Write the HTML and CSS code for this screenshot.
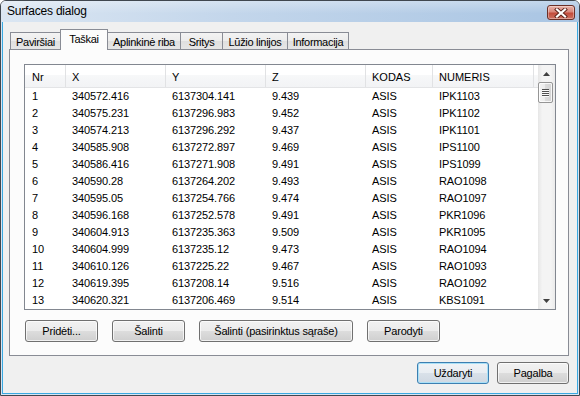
FILE: index.html
```html
<!DOCTYPE html>
<html lang="lt">
<head>
<meta charset="UTF-8">
<title>Surfaces dialog</title>
<link rel="stylesheet" href="styles.css">
</head>
<body>
  <div class="window">
    <div class="titlebar">
      <span class="title">Surfaces dialog</span>
      <div class="close-btn">
        <svg width="14" height="10" viewBox="0 0 14 10">
          <path d="M3 1.5 L11 8.5 M11 1.5 L3 8.5" stroke="#5b2119" stroke-width="4" stroke-linecap="square"/>
          <path d="M3 1.5 L11 8.5 M11 1.5 L3 8.5" stroke="#ffffff" stroke-width="2.2" stroke-linecap="square"/>
        </svg>
      </div>
    </div>

    <div class="frame">
      <div class="client">
        <!-- tab headers -->
        <div class="tabs">
          <div class="tab tab-pav">Paviršiai</div>
          <div class="tab tab-tas active">Taškai</div>
          <div class="tab tab-apl">Aplinkinė riba</div>
          <div class="tab tab-sri">Sritys</div>
          <div class="tab tab-luz">Lūžio linijos</div>
          <div class="tab tab-inf">Informacija</div>
        </div>

        <div class="panel">
          <div class="list">
            <div class="list-body">
              <div class="list-head">
                <span class="first">Nr</span>
                <span>X</span>
                <span>Y</span>
                <span>Z</span>
                <span>KODAS</span>
                <span>NUMERIS</span>
                <span class="filler"></span>
              </div>
              <div id="rows"></div>
            </div>
            <div class="scrollbar">
              <div class="sb-btn">
                <svg width="7" height="4" viewBox="0 0 7 4"><polygon points="0,4 7,4 3.5,0" fill="#404040"/></svg>
              </div>
              <div class="sb-thumb">
                <svg width="7" height="8" viewBox="0 0 7 8">
                  <path d="M0 0.5 H7 M0 2.5 H7 M0 4.5 H7 M0 6.5 H7" stroke="#505050" stroke-width="1"/>
                  <path d="M0 1.5 H7 M0 3.5 H7 M0 5.5 H7 M0 7.5 H7" stroke="#fafafa" stroke-width="1"/>
                </svg>
              </div>
              <div class="sb-track"></div>
              <div class="sb-btn">
                <svg width="7" height="4" viewBox="0 0 7 4"><polygon points="0,0 7,0 3.5,4" fill="#404040"/></svg>
              </div>
            </div>
          </div>

          <div class="actions">
            <button class="btn">Pridėti...</button>
            <button class="btn">Šalinti</button>
            <button class="btn btn-wide">Šalinti (pasirinktus sąraše)</button>
            <button class="btn">Parodyti</button>
          </div>
        </div>

        <div class="footer">
          <button class="btn btn-default">Uždaryti</button>
          <button class="btn">Pagalba</button>
        </div>
      </div>
    </div>
  </div>

  <script>
    // Points shown in the list
    const points = [
      [1, '340572.416', '6137304.141', '9.439', 'ASIS', 'IPK1103'],
      [2, '340575.231', '6137296.983', '9.452', 'ASIS', 'IPK1102'],
      [3, '340574.213', '6137296.292', '9.437', 'ASIS', 'IPK1101'],
      [4, '340585.908', '6137272.897', '9.469', 'ASIS', 'IPS1100'],
      [5, '340586.416', '6137271.908', '9.491', 'ASIS', 'IPS1099'],
      [6, '340590.28', '6137264.202', '9.493', 'ASIS', 'RAO1098'],
      [7, '340595.05', '6137254.766', '9.474', 'ASIS', 'RAO1097'],
      [8, '340596.168', '6137252.578', '9.491', 'ASIS', 'PKR1096'],
      [9, '340604.913', '6137235.363', '9.509', 'ASIS', 'PKR1095'],
      [10, '340604.999', '6137235.12', '9.473', 'ASIS', 'RAO1094'],
      [11, '340610.126', '6137225.22', '9.467', 'ASIS', 'RAO1093'],
      [12, '340619.395', '6137208.14', '9.516', 'ASIS', 'RAO1092'],
      [13, '340620.321', '6137206.469', '9.514', 'ASIS', 'KBS1091']
    ];

    const rows = document.getElementById('rows');
    for (let p of points) {
      let row = document.createElement('div');
      row.className = 'row';
      p.forEach((val, i) => {
        let cell = document.createElement('span');
        if (i === 0) cell.className = 'first';
        cell.textContent = val;
        row.appendChild(cell);
      });
      rows.appendChild(row);
    }
  </script>
</body>
</html>
```

FILE: styles.css
```css
* {
  box-sizing: border-box;
}

body {
  margin: 0;
  font-family: "Liberation Sans", Arial, sans-serif;
  font-size: 11px;
  color: #000;
  background: #fff;
}

/* Window frame */
.window {
  width: 580px;
  height: 396px;
  border: 1px solid #40474f;
  border-radius: 6px 6px 0 0;
  overflow: hidden;
  display: flex;
  flex-direction: column;
}

.titlebar {
  height: 21px;
  flex: none;
  display: flex;
  justify-content: space-between;
  align-items: flex-start;
  background: linear-gradient(to bottom, rgba(255, 255, 255, 0.3), rgba(255, 255, 255, 0) 60%),
              linear-gradient(to right, #dbe6f2, #c3d6eb 40%, #a9c5e3);
}

.title {
  font-size: 12px;
  line-height: 21px;
  margin-left: 6px;
  letter-spacing: -0.2px;
}

.close-btn {
  width: 28px;
  height: 15px;
  margin: 4px 4px 0 0;
  border: 1px solid #6b2f27;
  border-radius: 3px;
  background: linear-gradient(#e9b2a8, #d8867a 45%, #c24b3b 55%, #cd7262);
  box-shadow: inset 0 0 0 1px rgba(255, 255, 255, 0.35);
  display: flex;
  align-items: center;
  justify-content: center;
}

.frame {
  flex: 1;
  padding: 0 1px 1px;
  background: #d6e5f4;
}

.client {
  height: 100%;
  border: 1px solid #3aa9e1;
  border-top: 0;
  background: #f0f0f0;
  padding: 7px 0 0 6px;
}

/* Tabs */
.tabs {
  display: flex;
  align-items: flex-end;
  height: 20px;
  padding-left: 1px;
}

.tab {
  height: 17px;
  border: 1px solid #898c95;
  border-bottom: 0;
  margin-left: -1px;
  padding-top: 2px;
  line-height: 14px;
  text-align: center;
  letter-spacing: -0.3px;
  background: linear-gradient(#f3f3f3, #ececec 50%, #dfdfdf 50%, #e6e6e6);
}

.tab.active {
  height: 21px;
  margin-bottom: -1px;
  background: #fcfcfc;
  position: relative;
  z-index: 1;
}

.tab-pav { width: 51px; margin-left: 0; }
.tab-tas { width: 48px; }
.tab-apl { width: 74px; }
.tab-sri { width: 43px; }
.tab-luz { width: 66px; }
.tab-inf { width: 62px; }

.panel {
  width: 560px;
  height: 307px;
  border: 1px solid #898c95;
  background: #fcfcfc;
  padding: 14px 0 0 14px;
}

/* List view */
.list {
  width: 532px;
  height: 246px;
  border: 1px solid #828790;
  background: #fff;
  display: flex;
}

.list-body {
  flex: 1;
  overflow: hidden;
}

.list-head,
.row {
  display: grid;
  grid-template-columns: 41px 100px 100px 100px 67px 101px 1fr;
}

.list-head {
  height: 23px;
  border-bottom: 1px solid #e3e4e6;
  background: linear-gradient(#fff 0%, #fff 45%, #f7f8f9 45%, #f2f3f5);
}

.list-head span {
  border-right: 1px solid #e1e2e4;
  padding: 3px 0 0 6px;
  line-height: 19px;
}

.list-head span.filler {
  border-right: 0;
}

.row {
  height: 17px;
  line-height: 17px;
  letter-spacing: -0.1px;
}

.row span {
  padding-left: 6px;
  white-space: nowrap;
}

.list-head span.first,
.row span.first {
  padding-left: 7px;
}

/* Scrollbar */
.scrollbar {
  width: 17px;
  display: flex;
  flex-direction: column;
  background: linear-gradient(to right, #e6e6e6, #f4f4f4 25%, #f4f4f4 75%, #ebebeb);
}

.sb-btn {
  height: 17px;
  display: flex;
  align-items: center;
  justify-content: center;
}

.sb-thumb {
  height: 21px;
  margin-right: 2px;
  border: 1px solid #969696;
  border-radius: 2px;
  background: linear-gradient(to right, #f4f4f4, #ebebeb 50%, #dcdcdc 50%, #d4d4d4);
  box-shadow: inset 0 0 0 1px rgba(255, 255, 255, 0.8);
  display: flex;
  align-items: center;
  justify-content: center;
}

.sb-track {
  flex: 1;
}

/* Buttons */
.btn {
  width: 73px;
  height: 22px;
  padding: 0;
  border: 1px solid #707070;
  border-radius: 3px;
  background: linear-gradient(#f2f2f2, #ebebeb 50%, #dddddd 50%, #cfcfcf);
  box-shadow: inset 0 0 0 1px rgba(255, 255, 255, 0.7);
  font-family: inherit;
  font-size: 11px;
  color: #000;
  letter-spacing: -0.2px;
  text-align: center;
}

.btn-wide {
  width: 154px;
}

.btn-default {
  border-color: #3c7fb1;
  background: linear-gradient(#f0f3f6, #e8edf2 50%, #d9e1e9 50%, #cfd8e2);
  box-shadow: inset 0 0 0 1px #a9e0f7;
}

.actions {
  display: flex;
  gap: 14px;
  margin: 10px 0 0 1px;
}

.footer {
  width: 560px;
  margin-top: 6px;
  display: flex;
  justify-content: flex-end;
  gap: 8px;
}

.footer .btn {
  width: 72px;
}
```
